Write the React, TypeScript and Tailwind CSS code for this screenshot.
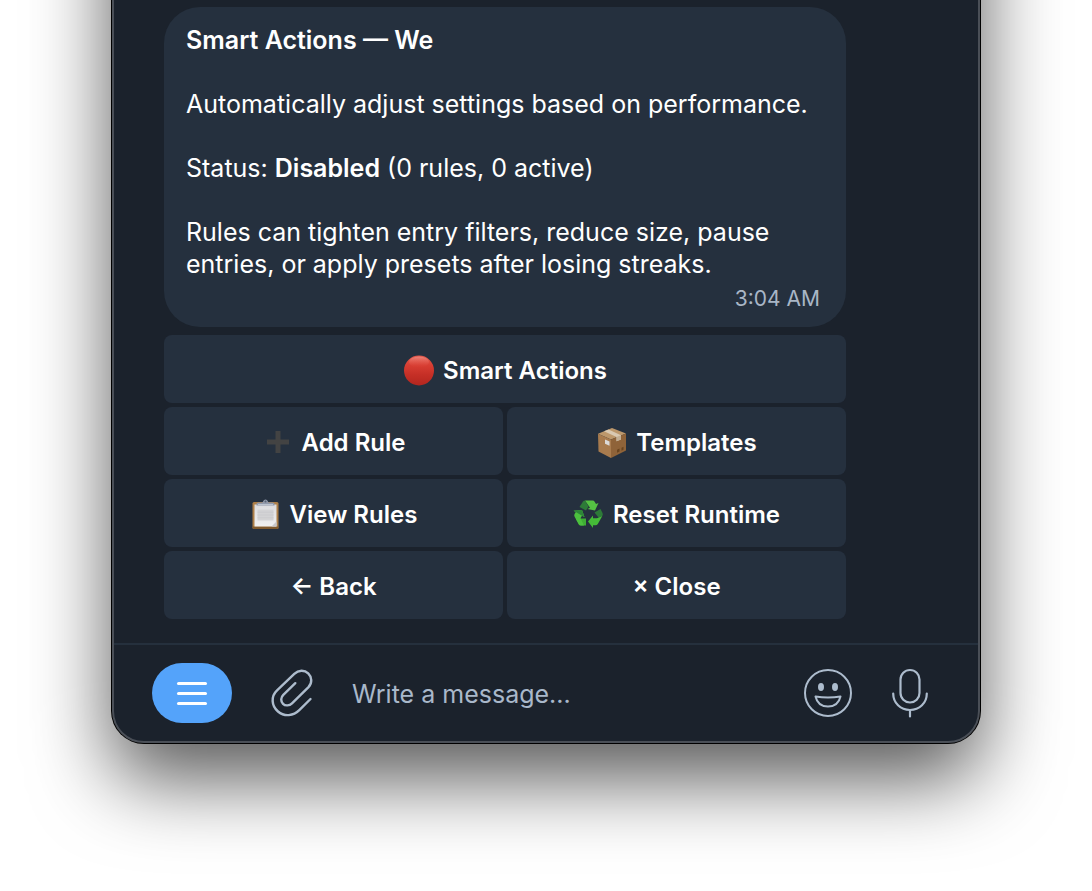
import type { ReactNode } from 'react';

const RedCircle = () => (
  <svg width="32" height="32" viewBox="0 0 32 32" aria-hidden="true">
    <defs>
      <linearGradient id="redBall" x1="0" y1="0" x2="0" y2="1">
        <stop offset="0%" stopColor="#e2584c" />
        <stop offset="35%" stopColor="#d63c31" />
        <stop offset="65%" stopColor="#c52f26" />
        <stop offset="100%" stopColor="#b3261f" />
      </linearGradient>
      <linearGradient id="redShine" x1="0" y1="0" x2="0" y2="1">
        <stop offset="0%" stopColor="#f3988d" stopOpacity="0.7" />
        <stop offset="100%" stopColor="#e4483b" stopOpacity="0" />
      </linearGradient>
    </defs>
    <circle cx="16" cy="15.5" r="15" fill="url(#redBall)" />
    <ellipse cx="16" cy="7" rx="10" ry="5.5" fill="url(#redShine)" />
  </svg>
);

const Plus = () => (
  <svg width="32" height="32" viewBox="0 0 32 32" aria-hidden="true">
    <path d="M13.5 4h5v8.500H27v5h-8.500V26h-5v-8.500H5v-5h8.500z" fill="#434343" />
  </svg>
);

const Clipboard = () => (
  <svg width="32" height="32" viewBox="0 0 32 32" aria-hidden="true">
    <defs>
      <linearGradient id="paper" x1="0" y1="0" x2="0" y2="1">
        <stop offset="0%" stopColor="#dcdcdf" />
        <stop offset="100%" stopColor="#f0f0f0" />
      </linearGradient>
    </defs>
    <rect x="2.500" y="3" width="26" height="27" rx="1.500" fill="#ad7f48" />
    <path d="M2.500 27.500h26v1a1.500 1.500 0 0 1-1.500 1.500H4a1.500 1.500 0 0 1-1.500-1.500z" fill="#805a2e" />
    <rect x="4.500" y="5.500" width="22" height="22" fill="url(#paper)" />
    <rect x="7.500" y="10.500" width="16" height="11" fill="#d3d3d5" />
    <path d="M7.500 13.200h16M7.500 16h16M7.500 18.800h16" stroke="#cbcbce" strokeWidth="1" />
    <path d="M21.500 27.500l5-5v5z" fill="#c8c8cb" />
    <path d="M6.500 6.500V5q0-1.500 2-1.500H12q1-.3 1.200-1.200a2.400 2.400 0 0 1 4.600 0q.2.900 1.200 1.200h3.500q2 0 2 1.500v1.500z" fill="#929aab" />
    <path d="M8 5.500h15" stroke="#bcc4d0" strokeWidth="1" />
    <circle cx="15.500" cy="2.500" r="1" fill="#5a6577" />
  </svg>
);

const Package = () => (
  <svg width="32" height="32" viewBox="0 0 32 32" aria-hidden="true">
    <path d="M16 1L30 6.500 15 12.500 2 6.800z" fill="#bd986c" />
    <path d="M2 6.800l13 5.700V31L2.500 24.500z" fill="#a87b4e" />
    <path d="M15 12.500L30 6.500V23.500L15 31z" fill="#8f6339" />
    <path d="M8 4.200l4.500-1.700L25 8.300v4.200L20.500 14.300V10.100z" fill="#d9c9b2" />
    <path d="M20.500 10.100L25 8.300v4.200L20.500 14.300z" fill="#c2ae93" />
    <path d="M9 12.500l4.500 2v4.300l-4.500-2z" fill="#dcdad8" />
    <path d="M21 22.800l2.500-1.200v3L21 25.800zM25.500 20.800l2-1v3l-2 1z" fill="#69441f" />
  </svg>
);

const Recycle = () => (
  <svg width="32" height="32" viewBox="0 0 32 32" aria-hidden="true">
    <g transform="translate(-.5 -1)">
      {/* top arrow */}
      <path d="M7 9l3.500-5.500Q11.200 2.500 12.500 2.500L16 8.500 13.500 12.500z" fill="#2d7a38" />
      <path d="M12.500 2.500h7.500q1.500 0 2.300 1.400L23.500 6l2.500-1-3.500 7.500-7.500-1.500L17.500 9.700z" fill="#55c143" />
      {/* right arrow */}
      <path d="M22 14.500l6-3.500 2 4q.8 1.500-.2 3L26 19.500z" fill="#2d7a38" />
      <path d="M29.800 18l-4.500 8q-.8 1.300-2.300 1.300h-2.500V30L15.500 23.500l5-6v2.800h4z" fill="#45bb38" />
      {/* left arrow */}
      <path d="M13.500 20.500v7H8.500q-1.500 0-2.300-1.300L3.500 21l2.500-.5z" fill="#3fae34" />
      <path d="M6.300 26.300l-4.200-7.500q-.8-1.500 0-2.800L3.300 14 1 12.700l8.500-.7 2.500 7-2.500-1.300-1.500 2.600 3.500 7.200H8.500q-1.500 0-2.200-1.200z" fill="#4cc03e" />
      <path d="M3.300 14L1 12.700l8.500-.7 2.500 7-2.500-1.300z" fill="#2d8538" />
    </g>
  </svg>
);

const Paperclip = () => (
  <svg width="48" height="48" viewBox="0 0 48 48" fill="none" stroke="currentColor" strokeWidth="2.400" strokeLinecap="round" aria-hidden="true">
    <path d="M42.500 30L31.300 41.200C25.500 47 16.500 48 10 42.500S2.500 27.500 9.300 21.200L26.300 4.800C30.500.8 36.500.8 40.200 4.300S44.500 14 40.500 18.200L24 34.300C21.500 36.700 17.500 37.300 15 34.800S12.700 28.300 15.300 25.800L27.300 14.200" />
  </svg>
);

const Smile = () => (
  <svg width="48" height="48" viewBox="0 0 48 48" fill="none" stroke="currentColor" strokeWidth="2" aria-hidden="true">
    <circle cx="24" cy="24" r="23" />
    <ellipse cx="17" cy="18" rx="3" ry="4" fill="currentColor" stroke="none" />
    <ellipse cx="31" cy="18" rx="3" ry="4" fill="currentColor" stroke="none" />
    <path d="M11.500 27.500Q24 29.500 36.500 27.500C35 34 30.500 37.500 24 37.500S13 34 11.500 27.500z" strokeLinejoin="round" />
  </svg>
);

const Mic = () => (
  <svg width="36" height="50" viewBox="0 0 36 50" fill="none" stroke="currentColor" strokeWidth="2.200" strokeLinecap="round" aria-hidden="true">
    <rect x="8.500" y="2" width="19" height="32.500" rx="9.500" />
    <path d="M1.200 25.500C1.200 35 8.500 42 18 42s16.800-7 16.800-16.500M18 42v6.500" />
  </svg>
);

interface KeyboardButton {
  label: string;
  icon?: ReactNode;
}

const keyboard: KeyboardButton[][] = [
  [{ label: 'Smart Actions', icon: <RedCircle /> }],
  [
    { label: 'Add Rule', icon: <Plus /> },
    { label: 'Templates', icon: <Package /> },
  ],
  [
    { label: 'View Rules', icon: <Clipboard /> },
    { label: 'Reset Runtime', icon: <Recycle /> },
  ],
  [{ label: '← Back' }, { label: '× Close' }],
];

function Message() {
  return (
    <article className="rounded-[36px] bg-[#25303e] px-[22px] pt-[17px] pb-3 text-[25px] leading-8 text-white">
      <p className="font-semibold">Smart Actions — We</p>
      <p className="mt-8">Automatically adjust settings based on performance.</p>
      <p className="mt-8">
        Status: <strong className="font-semibold">Disabled</strong> (0 rules, 0 active)
      </p>
      <p className="mt-8">Rules can tighten entry filters, reduce size, pause entries, or apply presets after losing streaks.</p>
      <time className="mt-[3px] block pr-1 text-right text-[21px] text-[#a9b6c6]">3:04 AM</time>
    </article>
  );
}

function InlineKeyboard() {
  return (
    <div className="mt-2 flex flex-col gap-1">
      {keyboard.map((row) => (
        <div key={row[0].label} className="flex gap-1">
          {row.map(({ label, icon }) => (
            <button
              key={label}
              type="button"
              className="flex h-[68px] flex-1 items-center justify-center gap-2 rounded-lg bg-[#25303e] pt-1 text-2xl font-semibold text-white"
            >
              {icon}
              <span>{label}</span>
            </button>
          ))}
        </div>
      ))}
    </div>
  );
}

function Composer() {
  return (
    <footer className="flex h-[98px] items-center border-t-2 border-[#25303d] pr-[50px] pl-[38px] text-[#adbccd]">
      <button type="button" aria-label="Menu" className="flex h-[60px] w-20 flex-col items-center justify-center gap-[7px] rounded-full bg-[#54a3fa]">
        <span className="h-[3px] w-[30px] rounded-full bg-white" />
        <span className="h-[3px] w-[30px] rounded-full bg-white" />
        <span className="h-[3px] w-[30px] rounded-full bg-white" />
      </button>
      <button type="button" aria-label="Attach file" className="ml-9">
        <Paperclip />
      </button>
      <input
        type="text"
        aria-label="Message"
        placeholder="Write a message..."
        className="ml-9 min-w-0 flex-1 bg-transparent pt-[2px] text-[25px] leading-8 text-white outline-none placeholder:text-[#a9b8ca]"
      />
      <button type="button" aria-label="Emoji">
        <Smile />
      </button>
      <button type="button" aria-label="Record voice message" className="ml-10">
        <Mic />
      </button>
    </footer>
  );
}

export default function App() {
  return (
    <main className="min-h-screen overflow-hidden bg-white font-['Inter','Liberation_Sans',sans-serif]">
      {/* the top of the window is scrolled out of view */}
      <section className="mx-28 -mt-40 overflow-hidden rounded-[32px] border-2 border-[#4a4f57] bg-[#1b222c] shadow-[0_0_0_1px_#000,0_36px_80px_rgba(0,0,0,0.66)]">
        <div className="px-[50px] pt-[165px] pb-6">
          <div className="max-w-[682px]">
            <Message />
            <InlineKeyboard />
          </div>
        </div>
        <Composer />
      </section>
    </main>
  );
}
